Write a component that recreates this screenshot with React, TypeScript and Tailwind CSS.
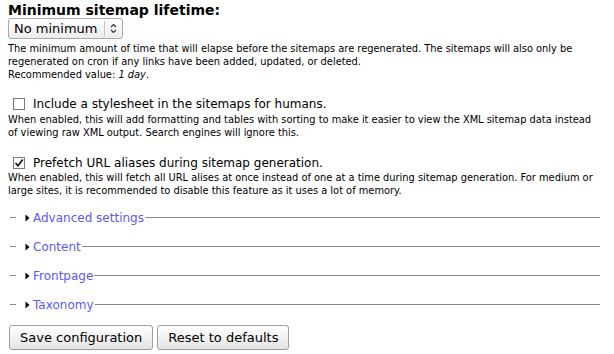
import React from "react"

const font = { fontFamily: '"DejaVu Sans", Verdana, sans-serif' }

function Checkbox({ checked }: { checked: boolean }) {
  return (
    <span className="inline-flex h-[12px] w-[12px] items-center justify-center border border-[#7a7a7a] bg-white">
      {checked && (
        <svg width="10" height="10" viewBox="0 0 10 10">
          <path d="M1.5 5 L4 7.8 L8.8 1.5" fill="none" stroke="#111" strokeWidth="1.6" />
        </svg>
      )}
    </span>
  )
}

function Fieldset({ label }: { label: string }) {
  return (
    <div className="flex h-[29px] items-center">
      <div className="ml-[2px] h-px w-[6px] bg-[#888]" />
      <svg className="ml-[9px]" width="5" height="8" viewBox="0 0 5 8">
        <path d="M0.5 0.5 L4.5 4 L0.5 7.5 Z" fill="#000" />
      </svg>
      <span className="ml-[3px] text-[12px] leading-[16px] text-[#5a5af8]">{label}</span>
      <div className="ml-[1px] h-px flex-1 bg-[#888]" />
    </div>
  )
}

function Button({ children }: { children: React.ReactNode }) {
  return (
    <button className="h-[25px] rounded-[3px] border border-[#9e9e9e] bg-gradient-to-b from-white to-[#e4e4e4] px-[10px] text-[13px] leading-[16px] text-black">
      {children}
    </button>
  )
}

export default function App() {
  return (
    <div style={font} className="min-h-[354px] w-[614px] bg-white pl-[8px] pr-[14px] pt-[2px] text-black">
      <div className="text-[14px] font-bold leading-[16px]">Minimum sitemap lifetime:</div>
      <div className="flex h-[21px] w-[115px] items-center rounded-[3px] border border-[#a8a8a8] bg-gradient-to-b from-white to-[#ececec]">
        <span className="flex-1 pl-[5px] text-[13px] leading-[16px]">No minimum</span>
        <div className="h-[15px] w-px bg-[#c4c4c4]" />
        <svg className="mx-[5px]" width="7" height="11" viewBox="0 0 7 11">
          <path d="M1 4 L3.5 1.5 L6 4 M1 7 L3.5 9.5 L6 7" fill="none" stroke="#333" strokeWidth="1.1" />
        </svg>
      </div>
      <div className="mt-[3px] text-[9.85px] leading-[13px]">
        The minimum amount of time that will elapse before the sitemaps are regenerated. The sitemaps will also only be
        regenerated on cron if any links have been added, updated, or deleted.
        <br />
        Recommended value: <em>1 day</em>.
      </div>

      <label className="mt-[15px] flex h-[16px] items-center">
        <span className="ml-[5px] flex">
          <Checkbox checked={false} />
        </span>
        <span className="ml-[8px] text-[12px] leading-[16px]">Include a stylesheet in the sitemaps for humans.</span>
      </label>
      <div className="mt-[1px] text-[9.85px] leading-[13px]">
        When enabled, this will add formatting and tables with sorting to make it easier to view the XML sitemap data instead
        of viewing raw XML output. Search engines will ignore this.
      </div>

      <label className="mt-[16px] flex h-[16px] items-center">
        <span className="ml-[5px] flex">
          <Checkbox checked={true} />
        </span>
        <span className="ml-[8px] text-[12px] leading-[16px]">Prefetch URL aliases during sitemap generation.</span>
      </label>
      <div className="mt-[0px] text-[9.85px] leading-[13px]">
        When enabled, this will fetch all URL alises at once instead of one at a time during sitemap generation. For medium or
        large sites, it is recommended to disable this feature as it uses a lot of memory.
      </div>

      <div className="mt-[6px]">
        <Fieldset label="Advanced settings" />
        <Fieldset label="Content" />
        <Fieldset label="Frontpage" />
        <Fieldset label="Taxonomy" />
      </div>

      <div className="mt-[6px] flex gap-[4px] pl-[1px]">
        <Button>Save configuration</Button>
        <Button>Reset to defaults</Button>
      </div>
    </div>
  )
}
